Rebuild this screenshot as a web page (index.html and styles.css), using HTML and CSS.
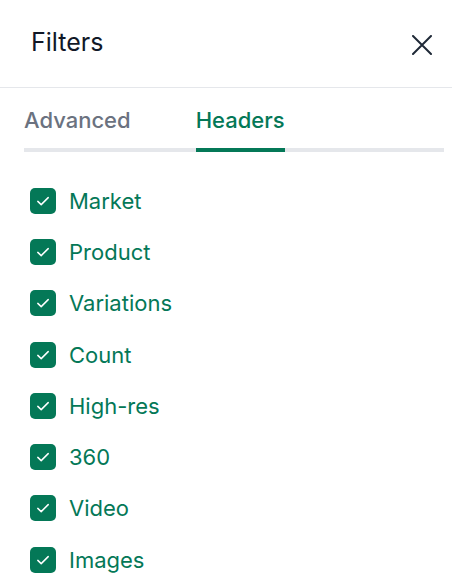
FILE: index.html
```html
<!DOCTYPE html>
<html>
<head>
<meta charset="utf-8">
<link rel="stylesheet" href="styles.css">
</head>
<body>
<div class="panel">
  <header class="head">
    <h1 class="title">Filters</h1>
    <button class="close" aria-label="Close">
      <svg width="20" height="20" viewBox="0 0 20 20" fill="none" stroke="#1f2937" stroke-width="2" stroke-linecap="round"><path d="M1 1L19 19M19 1L1 19"/></svg>
    </button>
  </header>
  <div class="body">
    <nav class="tabs">
      <div class="tab">Advanced</div>
      <div class="tab active">Headers</div>
    </nav>
    <ul class="list">
      <li class="item"><span class="box"><svg width="14" height="14" viewBox="0 0 14 14" fill="none" stroke="#fff" stroke-width="1.5" stroke-linecap="round" stroke-linejoin="round"><path d="M1.8 7.4L5.2 10.6L12.2 3.6"/></svg></span>Market</li>
      <li class="item"><span class="box"><svg width="14" height="14" viewBox="0 0 14 14" fill="none" stroke="#fff" stroke-width="1.5" stroke-linecap="round" stroke-linejoin="round"><path d="M1.8 7.4L5.2 10.6L12.2 3.6"/></svg></span>Product</li>
      <li class="item"><span class="box"><svg width="14" height="14" viewBox="0 0 14 14" fill="none" stroke="#fff" stroke-width="1.5" stroke-linecap="round" stroke-linejoin="round"><path d="M1.8 7.4L5.2 10.6L12.2 3.6"/></svg></span>Variations</li>
      <li class="item"><span class="box"><svg width="14" height="14" viewBox="0 0 14 14" fill="none" stroke="#fff" stroke-width="1.5" stroke-linecap="round" stroke-linejoin="round"><path d="M1.8 7.4L5.2 10.6L12.2 3.6"/></svg></span>Count</li>
      <li class="item"><span class="box"><svg width="14" height="14" viewBox="0 0 14 14" fill="none" stroke="#fff" stroke-width="1.5" stroke-linecap="round" stroke-linejoin="round"><path d="M1.8 7.4L5.2 10.6L12.2 3.6"/></svg></span>High-res</li>
      <li class="item"><span class="box"><svg width="14" height="14" viewBox="0 0 14 14" fill="none" stroke="#fff" stroke-width="1.5" stroke-linecap="round" stroke-linejoin="round"><path d="M1.8 7.4L5.2 10.6L12.2 3.6"/></svg></span>360</li>
      <li class="item"><span class="box"><svg width="14" height="14" viewBox="0 0 14 14" fill="none" stroke="#fff" stroke-width="1.5" stroke-linecap="round" stroke-linejoin="round"><path d="M1.8 7.4L5.2 10.6L12.2 3.6"/></svg></span>Video</li>
      <li class="item"><span class="box"><svg width="14" height="14" viewBox="0 0 14 14" fill="none" stroke="#fff" stroke-width="1.5" stroke-linecap="round" stroke-linejoin="round"><path d="M1.8 7.4L5.2 10.6L12.2 3.6"/></svg></span>Images</li>
    </ul>
  </div>
</div>
</body>
</html>
```
FILE: styles.css
```css
* { box-sizing: border-box; }
html, body { margin: 0; padding: 0; background: #fff; }
body { font-family: Inter, "Noto Sans", sans-serif; }
.panel { width: 452px; height: 588px; overflow: hidden; }
.head {
  height: 88px;
  display: flex;
  align-items: center;
  justify-content: space-between;
  padding: 0 20px 3px 31px;
  border-bottom: 1px solid #e5e7eb;
}
.title { margin: 0; font-size: 25px; line-height: 30px; font-weight: 400; color: #111827; }
.close { background: none; border: 0; padding: 0; width: 20px; height: 20px; margin-top: 6px; display: block; }
.close svg { display: block; }
.body { padding: 0 8px 0 24px; }
.tabs { display: flex; border-bottom: 4px solid #e5e7eb; margin-top: 19px; }
.tab { font-size: 22px; line-height: 26px; font-weight: 500; color: #6b7280; padding: 0 0 15px; margin-bottom: -4px; border-bottom: 4px solid transparent; }
.tab:first-child { margin-right: 65px; }
.tab.active { color: #047857; border-bottom-color: #047857; }
.list { list-style: none; margin: 0; padding: 23px 0 0 6px; }
.item { display: flex; align-items: center; gap: 13px; height: 51.3px; font-size: 22px; color: #047857; }
.box { width: 26px; height: 26px; border-radius: 5px; background: #047857; display: flex; align-items: center; justify-content: center; flex: none; }
```
